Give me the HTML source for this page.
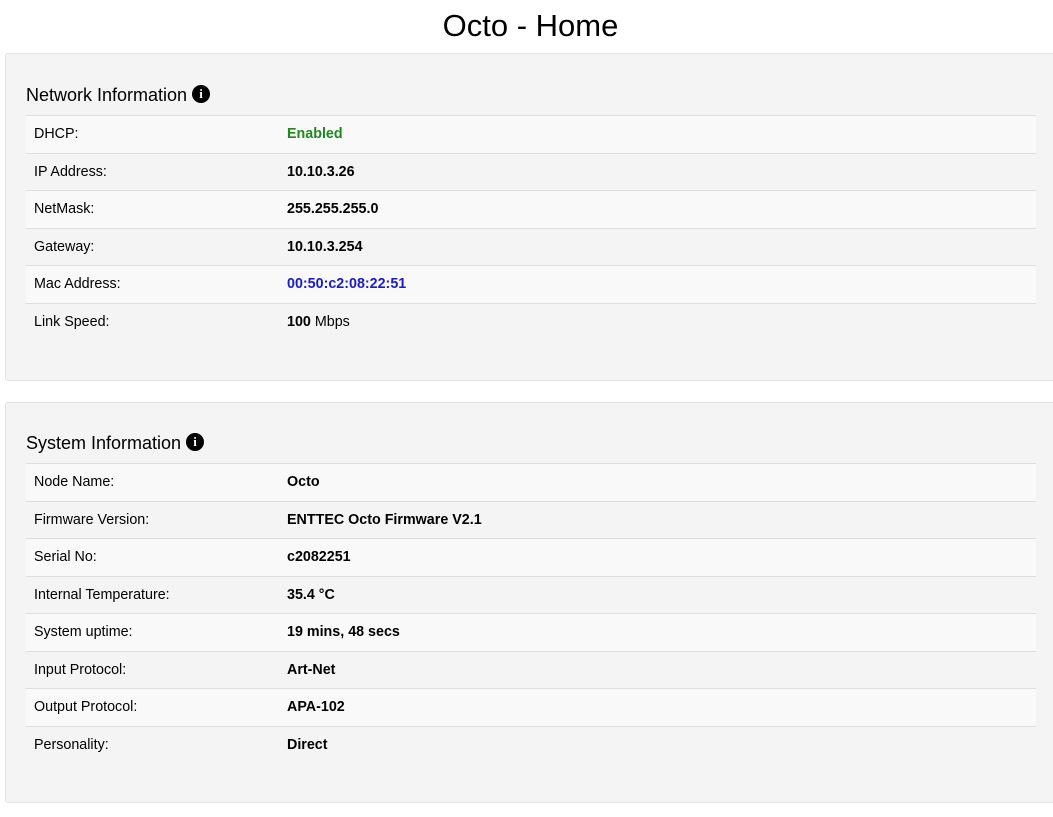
<!DOCTYPE html>
<html><head><style>
body{margin:0;background:#fff;font-family:"Liberation Sans",sans-serif;color:#000;width:1053px;height:817px;overflow:hidden;position:relative}
h1{position:absolute;top:8px;left:0;width:1061px;margin:0;text-align:center;font-weight:normal;font-size:31px;line-height:36px}
.panel{position:absolute;left:5px;width:1060px;background:#f4f4f4;border:1px solid #e2e2e2;border-radius:3px;box-sizing:border-box}
.hd{position:absolute;left:20px;font-size:18px;line-height:22px}
.i{display:inline-block;position:relative;top:-3px;width:18px;height:18px;border-radius:50%;background:#000;color:#fff;font:bold 13px/18px "Liberation Serif",serif;text-align:center;margin-left:5px}
table{position:absolute;left:20px;width:1010px;border-collapse:collapse;font-size:14.3px}
td{height:37.5px;padding:0 8px;border-top:1px solid #dedede;box-sizing:border-box}
tr:nth-child(odd) td{background:#f9f9f9}
td:first-child{width:253px}
td b{font-weight:bold}
</style></head><body>
<h1>Octo - Home</h1>
<div class="panel" style="top:53px;height:328px">
<div class="hd" style="top:30px">Network Information<span class="i">i</span></div>
<table style="top:61px">
<tr><td>DHCP:</td><td><b style="color:#1e8a1e">Enabled</b></td></tr>
<tr><td>IP Address:</td><td><b>10.10.3.26</b></td></tr>
<tr><td>NetMask:</td><td><b>255.255.255.0</b></td></tr>
<tr><td>Gateway:</td><td><b>10.10.3.254</b></td></tr>
<tr><td>Mac Address:</td><td><b style="color:#1a1acc">00:50:c2:08:22:51</b></td></tr>
<tr><td>Link Speed:</td><td><b>100</b> Mbps</td></tr>
</table></div>
<div class="panel" style="top:402px;height:401px">
<div class="hd" style="top:29px">System Information<span class="i">i</span></div>
<table style="top:60px">
<tr><td>Node Name:</td><td><b>Octo</b></td></tr>
<tr><td>Firmware Version:</td><td><b>ENTTEC Octo Firmware V2.1</b></td></tr>
<tr><td>Serial No:</td><td><b>c2082251</b></td></tr>
<tr><td>Internal Temperature:</td><td><b>35.4 °C</b></td></tr>
<tr><td>System uptime:</td><td><b>19 mins, 48 secs</b></td></tr>
<tr><td>Input Protocol:</td><td><b>Art-Net</b></td></tr>
<tr><td>Output Protocol:</td><td><b>APA-102</b></td></tr>
<tr><td>Personality:</td><td><b>Direct</b></td></tr>
</table></div>
</body></html>
